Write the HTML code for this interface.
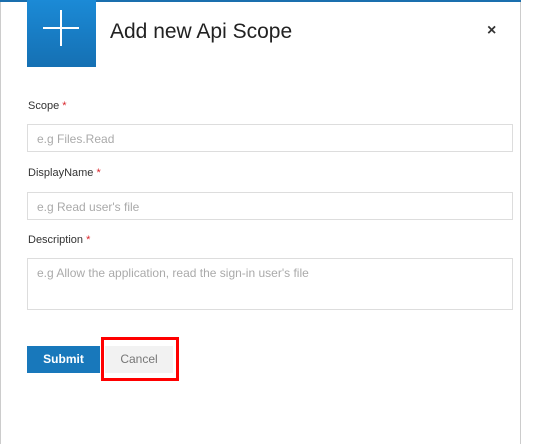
<!DOCTYPE html>
<html><head><style>
body{margin:0;width:544px;height:444px;background:#fff;font-family:"Liberation Sans",sans-serif;position:relative;overflow:hidden}
.a{position:absolute}
.lbl{position:absolute;left:28px;font-size:11px;color:#333}
.lbl b{color:#d9262c;font-weight:normal}
.in{position:absolute;left:27px;width:486px;border:1px solid #ddd;box-sizing:border-box;font-size:12px;color:#aaa;padding:7px 9px}
</style></head><body>
<div class="a" style="left:0;top:0;width:1px;height:444px;background:#ccc"></div>
<div class="a" style="left:520px;top:0;width:1px;height:444px;background:#ccc"></div>
<div class="a" style="left:0;top:0;width:521px;height:2px;background:#1a6fae"></div>
<div class="a" style="left:27px;top:0;width:69px;height:67px;background:linear-gradient(#1b8ad6,#1570b3)"></div>
<div class="a" style="left:43px;top:27px;width:36px;height:2px;background:#fff"></div>
<div class="a" style="left:60px;top:10px;width:2px;height:36px;background:#fff"></div>
<div class="a" style="left:110px;top:20px;font-size:21px;color:#222">Add new Api Scope</div>
<div class="a" style="left:487px;top:22px;font-size:16px;color:#333;font-weight:bold">×</div>
<div class="lbl" style="top:100px">Scope <b>*</b></div>
<div class="in" style="top:124px;height:28px">e.g Files.Read</div>
<div class="lbl" style="top:167px">DisplayName <b>*</b></div>
<div class="in" style="top:192px;height:28px">e.g Read user's file</div>
<div class="lbl" style="top:234px">Description <b>*</b></div>
<div class="in" style="top:258px;height:52px">e.g Allow the application, read the sign-in user's file</div>
<div class="a" style="left:27px;top:346px;width:73px;height:27px;background:#1878bb;color:#fff;font-size:12px;font-weight:bold;text-align:center;line-height:27px">Submit</div>
<div class="a" style="left:105px;top:346px;width:68px;height:27px;background:#f2f2f2;color:#777;font-size:12px;text-align:center;line-height:27px">Cancel</div>
<div class="a" style="left:101px;top:337px;width:78px;height:44px;border:3px solid #f00;box-sizing:border-box"></div>
</body></html>
